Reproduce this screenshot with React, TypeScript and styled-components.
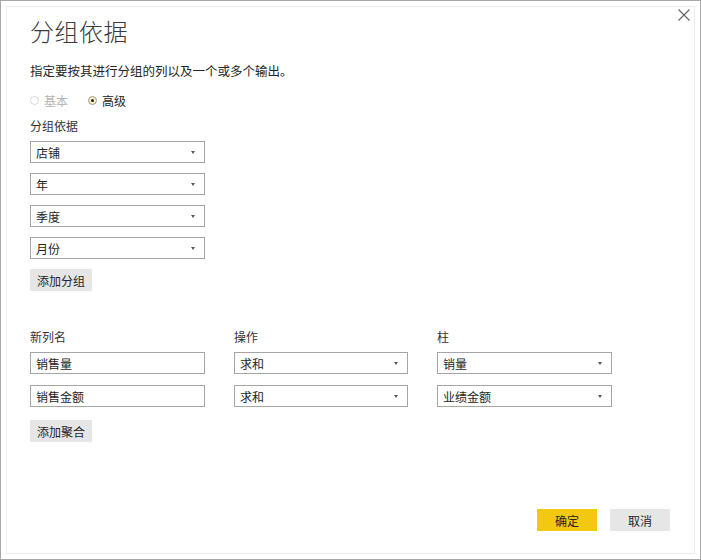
import React from "react";
import styled, { createGlobalStyle } from "styled-components";

const Global = createGlobalStyle`
  html, body { margin: 0; padding: 0; background: #fff; }
  body { font-family: "Noto Sans CJK SC", "Noto Sans", sans-serif; }
  * { box-sizing: border-box; }
`;

const Frame = styled.div`
  width: 701px;
  height: 560px;
  border: 1px solid #a8a8a8;
  padding: 5px;
  background: #fff;
`;

const Dialog = styled.div`
  position: relative;
  width: 100%;
  height: 100%;
  border: 1px solid #ececec;
  padding: 10px 24px 0 23px;
  display: flex;
  flex-direction: column;
  color: #333;
  font-size: 12px;
`;

const Close = styled.button`
  position: absolute;
  top: 1px;
  right: 3px;
  width: 14px;
  height: 14px;
  padding: 0;
  border: none;
  background: transparent;
  display: flex;
  align-items: center;
  justify-content: center;
`;

const Title = styled.h1`
  margin: 0;
  font-size: 24px;
  font-weight: 300;
  line-height: 28px;
  color: #3a3a3a;
  letter-spacing: 0.5px;
`;

const Subtitle = styled.p`
  margin: 17px 0 0 0;
  font-size: 12.5px;
  line-height: 18px;
  color: #252525;
`;

const RadioRow = styled.div`
  display: flex;
  gap: 20px;
  margin-top: 12px;
  height: 16px;
  align-items: center;
`;

const RadioLabel = styled.label<{ $disabled?: boolean }>`
  display: flex;
  align-items: center;
  gap: 5px;
  font-size: 12px;
  color: ${(p) => (p.$disabled ? "#b4b4b4" : "#252525")};
`;

const RadioDot = styled.span<{ $checked?: boolean; $disabled?: boolean }>`
  width: 9px;
  height: 9px;
  border-radius: 50%;
  border: 1px solid ${(p) => (p.$disabled ? "#d8d8d8" : "#9a9a9a")};
  background: ${(p) => (p.$checked ? "#fbf0c0" : "#fff")};
  display: flex;
  align-items: center;
  justify-content: center;
  &::after {
    content: "";
    display: ${(p) => (p.$checked ? "block" : "none")};
    width: 3px;
    height: 3px;
    border-radius: 50%;
    background: #222;
  }
`;

const Label = styled.div`
  font-size: 12px;
  line-height: 16px;
  color: #333;
  margin-bottom: -3px;
`;

const GroupSection = styled.div`
  display: flex;
  flex-direction: column;
  gap: 10px;
  margin-top: 10px;
  width: 175px;
`;

const FieldList = styled.div`
  display: flex;
  flex-direction: column;
  gap: 10px;
`;

const Box = styled.div<{ $w?: number }>`
  width: ${(p) => (p.$w ? `${p.$w}px` : "175px")};
  height: 22px;
  border: 1px solid #a6a6a6;
  display: flex;
  align-items: center;
  justify-content: space-between;
  padding: 0 9px 0 5px;
  font-size: 12px;
  color: #252525;
  background: #fff;
`;

const Arrow = styled.span`
  width: 0;
  height: 0;
  border-left: 2.5px solid transparent;
  border-right: 2.5px solid transparent;
  border-top: 3px solid #555;
`;

const Button = styled.button<{ $primary?: boolean; $w?: number }>`
  width: ${(p) => (p.$w ? `${p.$w}px` : "62px")};
  height: 22px;
  border: none;
  padding: 0;
  font-family: inherit;
  font-size: 12px;
  color: #252525;
  background: ${(p) => (p.$primary ? "#f2c811" : "#e6e6e6")};
`;

const AggSection = styled.div`
  margin-top: 38px;
  display: flex;
  flex-direction: column;
  gap: 13px;
`;

const AggGrid = styled.div`
  display: grid;
  grid-template-columns: 175px 174px 175px;
  column-gap: 29px;
  row-gap: 11px;
`;

const ColHead = styled.div`
  font-size: 12px;
  line-height: 16px;
  color: #333;
  margin-bottom: -4px;
`;

const Footer = styled.div`
  margin-top: auto;
  display: flex;
  justify-content: flex-end;
  gap: 13px;
  padding: 0 0 22px 0;
`;

function Select({ value, w }: { value: string; w?: number }) {
  return (
    <Box $w={w}>
      <span>{value}</span>
      <Arrow />
    </Box>
  );
}

export default function App() {
  return (
    <>
      <Global />
      <Frame>
        <Dialog>
          <Close aria-label="关闭">
            <svg width="12" height="12" viewBox="0 0 12 12">
              <path d="M0.5 0.5 L11.5 11.5 M11.5 0.5 L0.5 11.5" stroke="#666" strokeWidth="1.2" />
            </svg>
          </Close>
          <Title>分组依据</Title>
          <Subtitle>指定要按其进行分组的列以及一个或多个输出。</Subtitle>
          <RadioRow>
            <RadioLabel $disabled>
              <RadioDot $disabled />
              基本
            </RadioLabel>
            <RadioLabel>
              <RadioDot $checked />
              高级
            </RadioLabel>
          </RadioRow>
          <GroupSection>
            <Label>分组依据</Label>
            <FieldList>
              <Select value="店铺" />
              <Select value="年" />
              <Select value="季度" />
              <Select value="月份" />
            </FieldList>
            <Button>添加分组</Button>
          </GroupSection>
          <AggSection>
            <AggGrid>
              <ColHead>新列名</ColHead>
              <ColHead>操作</ColHead>
              <ColHead>柱</ColHead>
              <Box>销售量</Box>
              <Select value="求和" w={174} />
              <Select value="销量" />
              <Box>销售金额</Box>
              <Select value="求和" w={174} />
              <Select value="业绩金额" />
            </AggGrid>
            <Button>添加聚合</Button>
          </AggSection>
          <Footer>
            <Button $primary $w={60}>确定</Button>
            <Button $w={60}>取消</Button>
          </Footer>
        </Dialog>
      </Frame>
    </>
  );
}
